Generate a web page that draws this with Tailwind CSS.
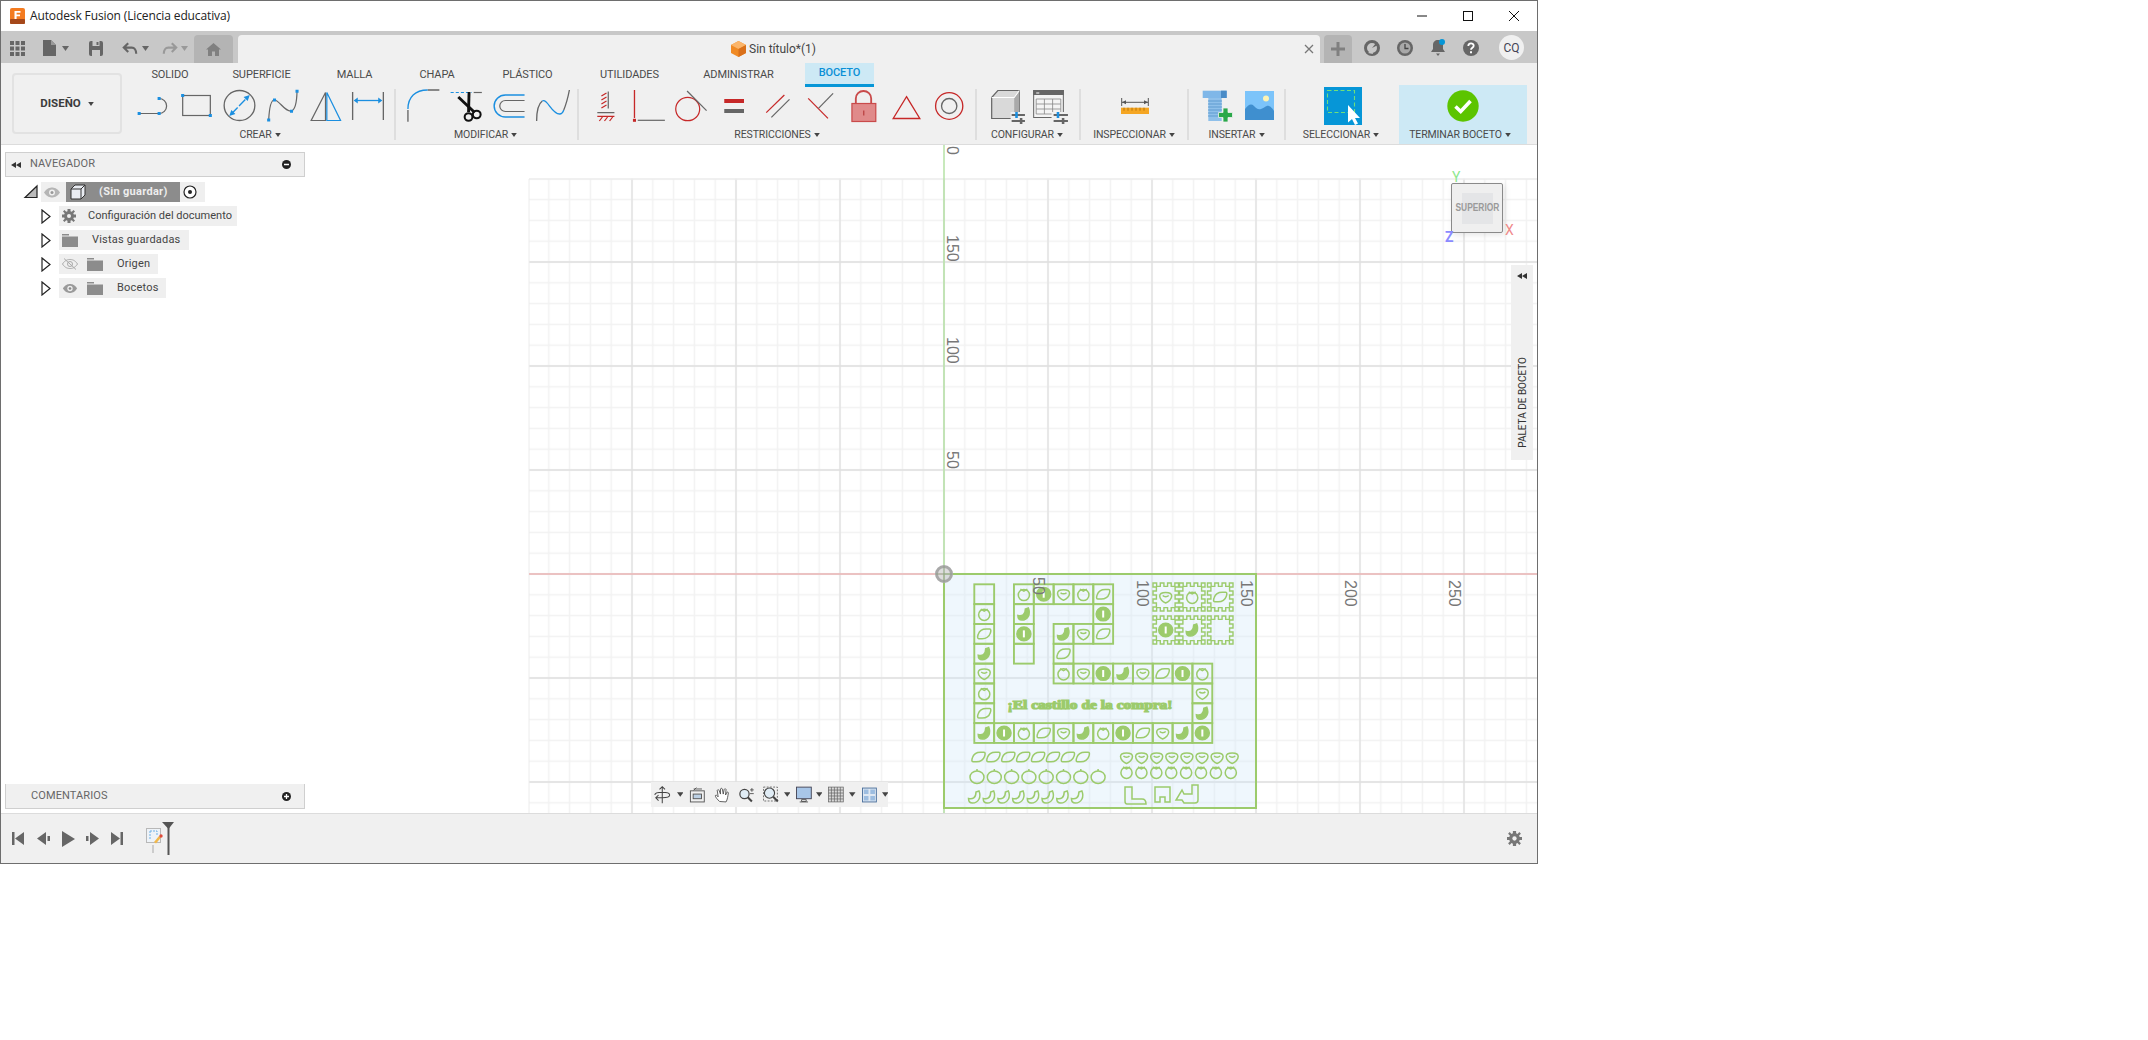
<!DOCTYPE html>
<html lang="es">
<head>
<meta charset="UTF-8">
<title>Autodesk Fusion</title>
<script src="https://cdn.jsdelivr.net/npm/@tailwindcss/browser@4"></script>
</head>
<body class="bg-white font-['Roboto',sans-serif] text-[#4a4a4a]">
<div class="w-[1538px] h-[864px] border border-[#6e6e6e] flex flex-col">

  <!-- title bar -->
  <div class="h-[30px] flex items-center bg-white">
    <svg class="ml-[9px]" width="15" height="16" viewBox="0 0 15 16"><rect width="15" height="16" rx="2" fill="#f47b20"/><rect y="11" width="15" height="5" rx="1" fill="#a5481a"/><path d="M4.500 3h6v1.800H6.600v1.600h3.400v1.800H6.600V11H4.500z" fill="#fff"/></svg>
    <span class="ml-[5px] text-[12px] font-['Open_Sans',sans-serif] text-[#222] tracking-[-0.12px]">Autodesk Fusion (Licencia educativa)</span>
    <div class="ml-auto flex items-center">
      <svg width="46" height="30" viewBox="0 0 46 30"><path d="M18 15h10" stroke="#111" stroke-width="1"/></svg>
      <svg width="46" height="30" viewBox="0 0 46 30"><rect x="18.500" y="10.500" width="9" height="9" fill="none" stroke="#111"/></svg>
      <svg width="46" height="30" viewBox="0 0 46 30"><path d="M18 10l10 10M28 10L18 20" stroke="#111"/></svg>
    </div>
  </div>

  <!-- tab strip -->
  <div class="h-[32px] bg-[#c8c8c8] flex items-end relative">
    <div class="flex items-center h-[32px] pt-[2px] absolute left-0 top-0 text-[#666]">
      <svg class="ml-[9px]" width="15" height="15" viewBox="0 0 15 15" fill="#666"><path d="M0 0h4v4H0zM5.500 0h4v4h-4zM11 0h4v4h-4zM0 5.500h4v4H0zM5.500 5.500h4v4h-4zM11 5.500h4v4h-4zM0 11h4v4H0zM5.500 11h4v4h-4zM11 11h4v4H11z"/></svg>
      <svg class="ml-[18px]" width="13" height="16" viewBox="0 0 13 16" fill="#666"><path d="M0 0h8l5 5v11H0z"/><path d="M8 0v5h5" fill="#999"/></svg>
      <svg class="ml-[6px]" width="7" height="5" viewBox="0 0 7 5" fill="#666"><path d="M0 0h7L3.500 5z"/></svg>
      <svg class="ml-[20px]" width="14" height="15" viewBox="0 0 14 15" fill="#666"><path d="M0 2a2 2 0 012-2h10a2 2 0 012 2v11a2 2 0 01-2 2H2a2 2 0 01-2-2z"/><path d="M3.500 0h7v5h-7zM3 9h8v6H3z" fill="#c8c8c8"/><path d="M7.500 1h2v3h-2z" fill="#666"/></svg>
      <svg class="ml-[19px]" width="16" height="15" viewBox="0 0 18 16" fill="none" stroke="#666" stroke-width="2.400"><path d="M7 2L2 7l5 5M3 7h8c3 0 5 3 5 7"/></svg>
      <svg class="ml-[4px]" width="7" height="5" viewBox="0 0 7 5" fill="#666"><path d="M0 0h7L3.500 5z"/></svg>
      <svg class="ml-[13px]" width="16" height="15" viewBox="0 0 18 16" fill="none" stroke="#999" stroke-width="2.400"><path d="M11 2l5 5-5 5M15 7H7c-3 0-5 3-5 7"/></svg>
      <svg class="ml-[3px]" width="7" height="5" viewBox="0 0 7 5" fill="#999"><path d="M0 0h7L3.500 5z"/></svg>
    </div>
    <div class="ml-[193px] w-[39px] h-[28px] rounded-t-[4px] bg-[#b4b4b4] flex items-center justify-center">
      <svg width="15" height="13" viewBox="0 0 15 13" fill="#808080"><path d="M7.500 0L15 6.500h-2V13H9V8.500H6V13H2V6.500H0z"/></svg>
    </div>
    <div class="ml-[5px] w-[1082px] h-[28px] rounded-t-[4px] bg-[#f0f0f0] flex items-center relative">
      <div class="flex items-center ml-[493px]">
        <svg width="15" height="16" viewBox="0 0 15 16"><path d="M7.500 0L15 4v8l-7.500 4L0 12V4z" fill="#f08a24"/><path d="M0 4l7.500 4L15 4 7.500 0z" fill="#fbb56a"/><path d="M7.500 8v8L15 12V4z" fill="#d9701a"/></svg>
        <span class="ml-[3px] text-[12px] text-[#444]">Sin título*(1)</span>
      </div>
      <svg class="absolute left-[1066px] top-[9px]" width="10" height="10" viewBox="0 0 10 10"><path d="M1 1l8 8M9 1L1 9" stroke="#777" stroke-width="1.300"/></svg>
    </div>
    <div class="ml-[4px] w-[28px] h-[28px] rounded-t-[4px] bg-[#b4b4b4] flex items-center justify-center">
      <svg width="14" height="14" viewBox="0 0 14 14"><path d="M7 0v14M0 7h14" stroke="#808080" stroke-width="3"/></svg>
    </div>
    <div class="flex items-center h-[32px] ml-[12px] pt-[1px]">
      <svg width="16" height="16" viewBox="0 0 16 16"><circle cx="8" cy="8" r="6.500" fill="none" stroke="#666" stroke-width="3"/><path d="M8 8l4-5 2 2z" fill="#666"/><path d="M4 13l4-3 1 4z" fill="#c8c8c8"/></svg>
      <svg class="ml-[17px]" width="16" height="16" viewBox="0 0 16 16"><circle cx="8" cy="8" r="8" fill="#666"/><circle cx="8" cy="8" r="5.500" fill="#a8a8a8"/><path d="M8 4v4.500h3.500" fill="none" stroke="#444" stroke-width="1.300"/></svg>
      <svg class="ml-[17px]" width="16" height="17" viewBox="0 0 16 17"><path d="M8 1c3 0 5 2 5 5v4l2 3H1l2-3V6c0-3 2-5 5-5zM6 14.500h4L8 17z" fill="#666"/><circle cx="12" cy="3" r="3" fill="#0696d7"/></svg>
      <svg class="ml-[17px]" width="16" height="16" viewBox="0 0 16 16"><circle cx="8" cy="8" r="8" fill="#666"/><path d="M5.300 6c0-3.400 5.400-3.400 5.400-.2 0 2-2.700 2-2.700 4" fill="none" stroke="#fff" stroke-width="1.800"/><path d="M7 11.200h2v2H7z" fill="#fff"/></svg>
      <div class="ml-[20px] w-[25px] h-[25px] rounded-full bg-[#f0f0f0] flex items-center justify-center text-[12px] text-[#445]">CQ</div>
    </div>
  </div>

  <!-- toolbar -->
  <div class="h-[82px] bg-[#f0f0f0] border-b border-[#dcdcdc] flex">
    <div class="ml-[11px] mt-[10px] w-[110px] shrink-0 h-[61px] rounded-[4px] border-2 border-[#e2e2e2] flex items-center justify-center gap-[7px] text-[11.500px] font-bold text-[#3c3c3c]">
      DISEÑO
      <svg width="6" height="4" viewBox="0 0 7 5" fill="#444"><path d="M0 0h7L3.500 5z"/></svg>
    </div>
    <div class="ml-[10px] flex flex-col">
      <div class="h-[24px] flex text-[11px] tracking-[-0.1px] text-[#4a4a4a]">
        <div class="w-[76px] flex items-center justify-center">SOLIDO</div>
        <div class="w-[107px] flex items-center justify-center">SUPERFICIE</div>
        <div class="w-[79px] flex items-center justify-center">MALLA</div>
        <div class="w-[86px] flex items-center justify-center">CHAPA</div>
        <div class="w-[95px] flex items-center justify-center">PLÁSTICO</div>
        <div class="w-[109px] flex items-center justify-center">UTILIDADES</div>
        <div class="w-[109px] flex items-center justify-center">ADMINISTRAR</div>
        <div class="ml-[12px] w-[69px] flex items-center justify-center bg-[#cde9f5] border-b-[3px] border-[#0696d7] text-[#0a8fd6] font-medium">BOCETO</div>
      </div>
      <div class="h-[57px] flex text-[10.500px] tracking-[-0.1px] text-[#4a4a4a]">

        <!-- crear -->
        <div class="w-[262px] flex flex-col pt-[1px]">
          <div class="flex h-[38px]">
            <svg width="43" height="38" viewBox="0 0 42 38" preserveAspectRatio="none"><path d="M7 25.500h19.300M26.300 10.500a7.500 7.500 0 010 15" fill="none" stroke="#666" stroke-width="1.200"/><path d="M5.500 24h3v3h-3zM25 9h3v3h-3zM25 24h3v3h-3z" fill="#1b8fe0"/></svg>
            <svg width="43" height="38" viewBox="0 0 42 38" preserveAspectRatio="none"><rect x="7.500" y="7.500" width="27" height="20" fill="none" stroke="#666" stroke-width="1.200"/><path d="M6 6h3v3H6zM33 26h3v3h-3z" fill="#1b8fe0"/></svg>
            <svg width="43" height="38" viewBox="0 0 42 38" preserveAspectRatio="none"><circle cx="21" cy="17.500" r="15" fill="none" stroke="#666" stroke-width="1.300"/><path d="M13 26l16-17" stroke="#1b8fe0" stroke-width="1.300" stroke-dasharray="9 2"/><path d="M11 28l2-6 4 4zM31 7l-2 6-4-4z" fill="#1b8fe0"/></svg>
            <svg width="43" height="38" viewBox="0 0 42 38" preserveAspectRatio="none"><path d="M7.500 32C8 22 9 12 13 12c5 0 10 12 16.500 11C34 22 35 12 35.200 3" fill="none" stroke="#666" stroke-width="1.200"/><path d="M6 30.500h3v3H6zM11.700 10.500h3v3h-3zM28.300 21.800h3v3h-3zM33.700 1.800h3v3h-3z" fill="#1b8fe0"/></svg>
            <svg width="43" height="38" viewBox="0 0 42 38" preserveAspectRatio="none" fill="none"><path d="M21 4.500v28H7z" stroke="#666" stroke-width="1.200"/><path d="M22.300 4.500v28H35.700z" stroke="#1b8fe0" stroke-width="1.200"/></svg>
            <svg width="43" height="38" viewBox="0 0 42 38" preserveAspectRatio="none"><path d="M5.500 4v28M35.500 4v28" stroke="#666" stroke-width="1.300"/><path d="M9 12.500h23" stroke="#1b8fe0" stroke-width="1.300"/><path d="M6.500 12.500l4-3v6zM34.500 12.500l-4-3v6z" fill="#1b8fe0"/></svg>
          </div>
          <div class="h-[18px] flex items-center justify-center gap-[3px] pr-[6px]">CREAR <svg width="6" height="4" viewBox="0 0 7 5" fill="#444"><path d="M0 0h7L3.500 5z"/></svg></div>
        </div>
        <div class="w-[2px] h-[51px] mt-[2px] bg-[#dedede]"></div>

        <!-- modificar -->
        <div class="w-[181px] flex flex-col pt-[1px]">
          <div class="flex h-[38px] pl-[6px]">
            <svg width="43" height="38" viewBox="0 0 42 38" preserveAspectRatio="none" fill="none" stroke-width="1.300"><path d="M25 2h11.500M5.800 22v11.700" stroke="#666"/><path d="M25 2C13 2 5.800 9 5.800 21" stroke="#1b8fe0"/></svg>
            <svg width="43" height="38" viewBox="0 0 42 38" preserveAspectRatio="none" fill="none"><path d="M5.500 4.500H26" stroke="#1b8fe0" stroke-width="1.200" stroke-dasharray="3 2"/><path d="M28 4.500h8" stroke="#666" stroke-width="1.200"/><path d="M13 9l16 15.500" stroke="#111" stroke-width="2.800"/><path d="M23.500 4l-.5 20" stroke="#111" stroke-width="2.800"/><circle cx="23" cy="29" r="3.800" stroke="#111" stroke-width="2"/><circle cx="31" cy="26.500" r="3.800" stroke="#111" stroke-width="2"/></svg>
            <svg width="43" height="38" viewBox="0 0 42 38" preserveAspectRatio="none" fill="none"><path d="M35.700 7H17a11 11 0 000 22h18.700" stroke="#1b8fe0" stroke-width="1.400"/><path d="M35.700 12.500H17a5.500 5.500 0 000 11h18.700" stroke="#666" stroke-width="1.200"/></svg>
            <svg width="43" height="38" viewBox="0 0 42 38" preserveAspectRatio="none" fill="none" stroke-width="1.300"><path d="M5.500 33C5.500 24 7 16 11 13" stroke="#666"/><path d="M11 13c5-3 9 13 17 13 2 0 3-1 4-4" stroke="#1b8fe0"/><path d="M32 22c2-5 4-12 5.500-20" stroke="#666"/></svg>
          </div>
          <div class="h-[18px] flex items-center justify-center gap-[3px] pr-[2px]">MODIFICAR <svg width="6" height="4" viewBox="0 0 7 5" fill="#444"><path d="M0 0h7L3.500 5z"/></svg></div>
        </div>
        <div class="w-[2px] h-[51px] mt-[2px] bg-[#dedede]"></div>

        <!-- restricciones -->
        <div class="w-[396px] flex flex-col pt-[1px]">
          <div class="flex h-[38px] pl-[5px]">
            <svg width="43" height="38" viewBox="0 0 42 38" preserveAspectRatio="none" fill="none"><path d="M23.700 3.500v17M13 24.700h16.700" stroke="#666" stroke-width="1.200"/><path d="M22 5l-5 3M22 9l-5 3M22 13l-5 3M22 17l-5 3M13 28.300h16.700M18 29l-3 4M23 29l-3 4M28 29l-3 4" stroke="#c62828" stroke-width="1.200"/></svg>
            <svg width="43" height="38" viewBox="0 0 42 38" preserveAspectRatio="none"><path d="M7.300 2v28" stroke="#c62828" stroke-width="1.300"/><path d="M5.800 30.800h3v3h-3z" fill="#c62828"/><path d="M10.500 32.300H37" stroke="#666" stroke-width="1.200"/></svg>
            <svg width="43" height="38" viewBox="0 0 42 38" preserveAspectRatio="none" fill="none" stroke-width="1.200"><circle cx="17.300" cy="21" r="11.700" stroke="#c62828"/><path d="M16.700 3l19 19.700" stroke="#666"/></svg>
            <svg width="43" height="38" viewBox="0 0 42 38" preserveAspectRatio="none"><path d="M11 11h19.300v4H11z" fill="#c62828"/><path d="M11 21h19.300v4H11z" fill="#666"/></svg>
            <svg width="43" height="38" viewBox="0 0 42 38" preserveAspectRatio="none" stroke-width="1.200"><path d="M10 24.700L27.700 7" stroke="#c62828"/><path d="M15 29.300l17.700-18" stroke="#666"/></svg>
            <svg width="43" height="38" viewBox="0 0 42 38" preserveAspectRatio="none" stroke-width="1.200"><path d="M9 10.300l19.300 20" stroke="#c62828"/><path d="M19 20.300L33.300 5.300" stroke="#666"/></svg>
            <svg width="43" height="38" viewBox="0 0 42 38" preserveAspectRatio="none"><path d="M13.500 15.500v-5a7.500 7.500 0 0115 0v5" fill="none" stroke="#c94a4a" stroke-width="1.800"/><rect x="9.700" y="15.500" width="23.300" height="18" fill="#e08a8a" stroke="#c94a4a" stroke-width="1.200"/><path d="M21.300 22.500v5" stroke="#b03030"/></svg>
            <svg width="43" height="38" viewBox="0 0 42 38" preserveAspectRatio="none"><path d="M21 8.700l13 21.800H8z" fill="none" stroke="#c62828" stroke-width="1.300"/></svg>
            <svg width="43" height="38" viewBox="0 0 42 38" preserveAspectRatio="none" fill="none" stroke-width="1.300"><circle cx="20.700" cy="18" r="13.300" stroke="#c62828"/><circle cx="20.700" cy="18" r="7.500" stroke="#666"/></svg>
          </div>
          <div class="h-[18px] flex items-center justify-center gap-[3px]">RESTRICCIONES <svg width="6" height="4" viewBox="0 0 7 5" fill="#444"><path d="M0 0h7L3.500 5z"/></svg></div>
        </div>
        <div class="w-[2px] h-[51px] mt-[2px] bg-[#dedede]"></div>

        <!-- configurar -->
        <div class="w-[102px] flex flex-col pt-[1px]">
          <div class="flex h-[38px] pl-[7px]">
            <svg width="43" height="38" viewBox="0 0 42 38" preserveAspectRatio="none"><path d="M7.500 9.500l6-7h21v22l-5 6H7.500z" fill="#d9d9d9" stroke="#666" stroke-width="1.200"/><path d="M29.500 9v21.500l5-6v-22z" fill="#aaa"/><path d="M7.500 9.500h22l5-7" fill="none" stroke="#fff"/><path d="M26 24h16v11H26z" fill="#f0f0f0"/><path d="M27 27h13M27 33h13" stroke="#666" stroke-width="1.800"/><path d="M30.500 24h2.500v6h-2.500z" fill="#1b8fe0"/><path d="M35 30h2.500v6H35z" fill="#666"/></svg>
            <svg width="43" height="38" viewBox="0 0 42 38" preserveAspectRatio="none"><rect x="6.500" y="2.500" width="29" height="27" fill="#f4f4f4" stroke="#666"/><path d="M6 2h30v5H6z" fill="#666"/><path d="M9 5h3" stroke="#fff"/><path d="M9 11h24M9 16h24M9 21h24M9 26h24M9 11v15M17 11v15M25 11v15M33 11v15" stroke="#888" stroke-width=".8"/><path d="M24 24h18v11H24z" fill="#f0f0f0"/><path d="M26 27h14M26 33h14" stroke="#666" stroke-width="1.800"/><path d="M29 24h2.500v6H29z" fill="#1b8fe0"/><path d="M34 30h2.500v6H34z" fill="#666"/></svg>
          </div>
          <div class="h-[18px] flex items-center justify-center gap-[3px] pr-[2px]">CONFIGURAR <svg width="6" height="4" viewBox="0 0 7 5" fill="#444"><path d="M0 0h7L3.500 5z"/></svg></div>
        </div>
        <div class="w-[2px] h-[51px] mt-[2px] bg-[#dedede]"></div>

        <!-- inspeccionar -->
        <div class="w-[106px] flex flex-col pt-[1px]">
          <div class="flex h-[38px] pl-[33px]">
            <svg width="42" height="38" viewBox="0 0 42 38"><path d="M7.700 10v8M34.300 10v8M8 14.300h26" stroke="#555"/><path d="M8 14.300l4-2v4zM34 14.300l-4-2v4z" fill="#555"/><path d="M7 19.700h28V26H7z" fill="#f5a623"/><path d="M10 19.700v3M14 19.700v3M18 19.700v3M22 19.700v3M26 19.700v3M30 19.700v3" stroke="#a86a00" stroke-width=".8"/></svg>
          </div>
          <div class="h-[18px] flex items-center justify-center gap-[3px]">INSPECCIONAR <svg width="6" height="4" viewBox="0 0 7 5" fill="#444"><path d="M0 0h7L3.500 5z"/></svg></div>
        </div>
        <div class="w-[2px] h-[51px] mt-[2px] bg-[#dedede]"></div>

        <!-- insertar -->
        <div class="w-[95px] flex flex-col pt-[1px]">
          <div class="flex h-[38px] pl-[8px]">
            <svg width="42" height="38" viewBox="0 0 42 38"><path d="M5.700 2.700h24v7.300h-24z" fill="#7fb7e8"/><path d="M24 2.700h5.700V10H24z" fill="#4a8cc7"/><path d="M11.300 10h13.400v23H11.300z" fill="#8fc0ea"/><path d="M11 13h14M11 16h14M11 19h14M11 22h14M11 25h14M11 28h14" stroke="#5f9bd0"/><path d="M26 20h5v4.500h4.500v5H31V34h-5v-4.500h-4.500v-5H26z" fill="#2aa84a" stroke="#f0f0f0" stroke-width=".8"/></svg>
            <svg width="42" height="38" viewBox="0 0 42 38"><rect x="6" y="3" width="29" height="29" fill="#7cc4fa"/><path d="M6 32V21c3-4 6-6 9-3 2 2 4 4 7 3 4-1 5-4 8-3 2 .7 4 3 5 5v9z" fill="#3f8fcf"/><circle cx="27" cy="10.500" r="3" fill="#fdf3b4"/></svg>
          </div>
          <div class="h-[18px] flex items-center justify-center gap-[3px]">INSERTAR <svg width="6" height="4" viewBox="0 0 7 5" fill="#444"><path d="M0 0h7L3.500 5z"/></svg></div>
        </div>
        <div class="w-[2px] h-[51px] mt-[2px] bg-[#dedede]"></div>

        <!-- seleccionar -->
        <div class="w-[113px] flex flex-col">
          <div class="flex h-[39px] justify-center">
            <svg width="38" height="38" viewBox="0 0 38 38"><rect width="38" height="38" fill="#0696d7"/><rect x="3.500" y="3.500" width="27" height="22" fill="none" stroke="#6fe07a" stroke-width="1.100" stroke-dasharray="4 2.500"/><path d="M24 18v17.500l4-3.500 3 6 3-1.500-3-5.500h5z" fill="#fff"/></svg>
          </div>
          <div class="h-[18px] flex items-center justify-center gap-[3px] pr-[3px]">SELECCIONAR <svg width="6" height="4" viewBox="0 0 7 5" fill="#444"><path d="M0 0h7L3.500 5z"/></svg></div>
        </div>

        <!-- terminar boceto -->
        <div class="w-[128px] h-[59px] -mt-[2px] bg-[#cde9f5] flex flex-col">
          <div class="flex h-[41px] items-center justify-center pr-[1px] pt-[1px]">
            <svg width="32" height="32" viewBox="0 0 32 32"><circle cx="16" cy="16" r="15.700" fill="#5cc400"/><path d="M8.500 16.500l5.200 5L23.500 11" fill="none" stroke="#fff" stroke-width="3.600"/></svg>
          </div>
          <div class="h-[18px] flex items-center justify-center gap-[3px] pr-[6px]">TERMINAR BOCETO <svg width="6" height="4" viewBox="0 0 7 5" fill="#444"><path d="M0 0h7L3.500 5z"/></svg></div>
        </div>
      </div>
    </div>
  </div>

  <!-- viewport -->
  <div class="h-[668px] relative bg-white">
    <svg class="absolute left-[-1px] top-0" width="1537" height="668" viewBox="0 145 1537 668">
      <defs>
        <pattern id="minor" patternUnits="userSpaceOnUse" x="933.600" y="563.600" width="20.800" height="20.800"><path d="M10.400 0v20.800M0 10.400h20.800" stroke="#f2f2f2" stroke-width="1.500" fill="none"/></pattern>
        <pattern id="major" patternUnits="userSpaceOnUse" x="892" y="522" width="104" height="104"><path d="M52 0v104M0 52h104" stroke="#e0e0e0" stroke-width="1.300" fill="none"/></pattern>
      </defs>
      <rect x="529" y="178.500" width="1008" height="634.500" fill="url(#minor)"/>
      <rect x="529" y="178.500" width="1008" height="634.500" fill="url(#major)"/>
      <path d="M529 179h1008" stroke="#ececec" stroke-width="1.500"/>
      <path d="M529 179v634" stroke="#ececec"/>
      <rect x="944" y="574" width="312" height="234" fill="#cfe8fa" fill-opacity=".33"/>
      <path d="M944 145v668" stroke="#b6e2a6" stroke-width="1.500"/>
      <path d="M529 574h1008" stroke="#f2a0a0" stroke-width="1.200"/>
      <g id="board" fill="none" stroke="#9ccb6c" stroke-width="1.500"></g>
      <rect x="944" y="574" width="312" height="234" fill="none" stroke="#9ccb6c" stroke-width="2"/>
      <text x="1090" y="708.500" text-anchor="middle" textLength="165" lengthAdjust="spacingAndGlyphs" font-family="'Liberation Serif',serif" font-weight="700" font-size="11.500" fill="#9ccb6c" stroke="#9ccb6c" stroke-width="1.100">¡El castillo de la compra!</text>
      <g font-family="'Liberation Sans',sans-serif" font-size="16" fill="#777">
        <text transform="translate(947,146) rotate(90)">0</text>
        <text transform="translate(947,235) rotate(90)">150</text>
        <text transform="translate(947,337) rotate(90)">100</text>
        <text transform="translate(947,451) rotate(90)">50</text>
        <text transform="translate(1033,577) rotate(90)">50</text>
        <text transform="translate(1137,580) rotate(90)">100</text>
        <text transform="translate(1241,580) rotate(90)">150</text>
        <text transform="translate(1345,580) rotate(90)">200</text>
        <text transform="translate(1449,580) rotate(90)">250</text>
      </g>
      <circle cx="944" cy="574" r="7.500" fill="#cfcfcf" fill-opacity=".7" stroke="#a8a8a8" stroke-width="3"/>
      <path d="M944 566v16M936 574h16" stroke="#8aa07e" stroke-width=".8"/>
    </svg>

    <!-- browser panel -->
    <div class="absolute left-[4px] top-[7px] w-[300px] text-[11px] text-[#444]">
      <div class="h-[25px] bg-[#f0f0f0] border border-[#cfcfcf] flex items-center">
        <svg class="ml-[5px]" width="10" height="6" viewBox="0 0 10 6" fill="#333"><path d="M5 0v6L0 3zM10 0v6L5 3z"/></svg>
        <span class="ml-[9px] text-[#666] tracking-[0.1px]">NAVEGADOR</span>
        <svg class="ml-auto mr-[13px]" width="9" height="9" viewBox="0 0 9 9"><circle cx="4.500" cy="4.500" r="4.500" fill="#222"/><path d="M2 4.500h5" stroke="#fff" stroke-width="1.500"/></svg>
      </div>
      <div class="mt-[5px] flex flex-col gap-[4px]">
        <div class="h-[20px] flex items-center">
          <svg class="ml-[17px]" width="19" height="20" viewBox="0 0 19 20"><path d="M3 15.500L15 4v11.500z" fill="#bbb" stroke="#222" stroke-width="1.200"/></svg>
          <div class="w-[164px] h-[20px] bg-[#efefef] flex items-center">
            <svg class="ml-[2px]" width="18" height="11" viewBox="0 0 18 11"><path d="M1 5.500C4 1 7 .5 9 .5s5 .5 8 5c-3 4.500-6 5-8 5s-5-.5-8-5z" fill="#b5b5b5"/><circle cx="9" cy="5.500" r="3" fill="#efefef"/><circle cx="9" cy="5.500" r="1.500" fill="#999"/></svg>
            <div class="ml-[5px] w-[114px] h-[20px] bg-[#8c8c8c] flex items-center">
              <svg class="ml-[3px]" width="18" height="18" viewBox="0 0 18 18"><path d="M2 6l4-4h10v10l-4 4H2z" fill="#e9ecf2" stroke="#333" stroke-width="1"/><path d="M2 6h10v10M12 6l4-4" fill="none" stroke="#333"/></svg>
              <span class="ml-[12px] font-bold text-[#eeeeee] tracking-[0.3px]">(Sin guardar)</span>
            </div>
            <svg class="ml-[3px]" width="14" height="14" viewBox="0 0 14 14"><circle cx="7" cy="7" r="6" fill="#fff" stroke="#222" stroke-width="1.200"/><circle cx="7" cy="7" r="2" fill="#222"/></svg>
          </div>
        </div>
        <div class="h-[20px] flex items-center">
          <svg class="ml-[36px]" width="18" height="15" viewBox="0 0 18 15"><path d="M1 1l8 6.500L1 14z" fill="#fff" stroke="#222" stroke-width="1.200"/></svg>
          <div class="w-[178px] h-[20px] bg-[#efefef] flex items-center">
            <svg class="ml-[3px]" width="14" height="14" viewBox="0 0 14 14" fill="#777"><path d="M5.500 0h3v2.200l1.300.5L11.500 1l1.500 1.500-1.700 1.700.5 1.300H14v3h-2.200l-.5 1.300 1.700 1.700-1.500 1.500-1.700-1.700-1.300.5V14h-3v-2.200l-1.300-.5L2.500 13 1 11.500l1.700-1.700-.5-1.300H0v-3h2.200l.5-1.300L1 2.500 2.500 1l1.700 1.700 1.300-.5z"/><circle cx="7" cy="7" r="2" fill="#efefef"/></svg>
            <span class="ml-[12px]">Configuración del documento</span>
          </div>
        </div>
        <div class="h-[20px] flex items-center">
          <svg class="ml-[36px]" width="18" height="15" viewBox="0 0 18 15"><path d="M1 1l8 6.500L1 14z" fill="#fff" stroke="#222" stroke-width="1.200"/></svg>
          <div class="w-[130px] h-[20px] bg-[#efefef] flex items-center">
            <svg class="ml-[3px]" width="16" height="13" viewBox="0 0 16 13" fill="#8c8c8c"><path d="M0 0h7v1.500H0zM0 2.500h16V13H0z"/></svg>
            <span class="ml-[14px] tracking-[0.2px]">Vistas guardadas</span>
          </div>
        </div>
        <div class="h-[20px] flex items-center">
          <svg class="ml-[36px]" width="18" height="15" viewBox="0 0 18 15"><path d="M1 1l8 6.500L1 14z" fill="#fff" stroke="#222" stroke-width="1.200"/></svg>
          <div class="w-[99px] h-[20px] bg-[#efefef] flex items-center">
            <svg class="ml-[3px]" width="16" height="12" viewBox="0 0 16 12" fill="none" stroke="#aaa"><path d="M.5 6C3 2 6 1.500 8 1.500s5 .5 7.500 4.500C13 10 10 10.500 8 10.500S3 10 .5 6z"/><circle cx="8" cy="6" r="2.500"/><path d="M2 .5L14 11.500"/></svg>
            <svg class="ml-[9px]" width="16" height="13" viewBox="0 0 16 13" fill="#8c8c8c"><path d="M0 0h7v1.500H0zM0 2.500h16V13H0z"/></svg>
            <span class="ml-[14px] tracking-[0.2px]">Origen</span>
          </div>
        </div>
        <div class="h-[20px] flex items-center">
          <svg class="ml-[36px]" width="18" height="15" viewBox="0 0 18 15"><path d="M1 1l8 6.500L1 14z" fill="#fff" stroke="#222" stroke-width="1.200"/></svg>
          <div class="w-[107px] h-[20px] bg-[#efefef] flex items-center">
            <svg class="ml-[3px]" width="16" height="11" viewBox="0 0 18 11"><path d="M1 5.500C4 1 7 .5 9 .5s5 .5 8 5c-3 4.500-6 5-8 5s-5-.5-8-5z" fill="#9a9a9a"/><circle cx="9" cy="5.500" r="3" fill="#efefef"/><circle cx="9" cy="5.500" r="1.500" fill="#888"/></svg>
            <svg class="ml-[9px]" width="16" height="13" viewBox="0 0 16 13" fill="#8c8c8c"><path d="M0 0h7v1.500H0zM0 2.500h16V13H0z"/></svg>
            <span class="ml-[14px] tracking-[0.2px]">Bocetos</span>
          </div>
        </div>
      </div>
    </div>

    <!-- comments panel -->
    <div class="absolute left-[4px] top-[639px] w-[300px] h-[25px] bg-[#f0f0f0] border-b border-x border-[#cfcfcf] flex items-center text-[11px]">
      <span class="ml-[25px] text-[#666] tracking-[0.1px]">COMENTARIOS</span>
      <svg class="ml-auto mr-[13px]" width="9" height="9" viewBox="0 0 9 9"><circle cx="4.500" cy="4.500" r="4.500" fill="#222"/><path d="M2 4.500h5M4.500 2v5" stroke="#fff" stroke-width="1.300"/></svg>
    </div>

    <!-- view cube -->
    <div class="absolute left-[1450px] top-[38px] w-[52px] h-[50px] bg-[#efefef] border border-[#8a8a8a] rounded-[2px] shadow-[2px_2px_6px_rgba(0,0,0,0.1)] flex items-center justify-center">
      <div class="w-[31px] h-[31px] bg-[#e4e5e7] flex items-center justify-center"><span class="text-[10.500px] font-bold text-[#9a9a9a] font-['Liberation_Sans',sans-serif] scale-x-[0.8]">SUPERIOR</span></div>
    </div>
    <span class="absolute left-[1451px] top-[22px] text-[14px] text-[#8fe88f]">Y</span>
    <span class="absolute left-[1504px] top-[75px] text-[14px] text-[#f08a8a]">X</span>
    <span class="absolute left-[1444px] top-[82px] text-[14px] font-bold text-[#8a8aff]">Z</span>

    <!-- sketch palette tab -->
    <div class="absolute left-[1510px] top-[120px] w-[22px] h-[195px] bg-[#f0f0f0] flex flex-col items-center">
      <svg class="mt-[8px]" width="10" height="6" viewBox="0 0 10 6" fill="#333"><path d="M5 0v6L0 3zM10 0v6L5 3z"/></svg>
      <span class="mt-auto mb-[12px] [writing-mode:vertical-rl] rotate-180 text-[10px] text-[#333]">PALETA DE BOCETO</span>
    </div>

    <!-- nav bar -->
    <div class="absolute left-[650px] top-[637px] w-[237px] h-[25px] bg-[#f0f0f0] flex items-center">
      <svg class="ml-[2px]" width="20" height="20" viewBox="0 0 20 20" fill="none" stroke="#444" stroke-width="1.100"><path d="M10 1v18M7 4l3-3 3 3M2 10c0-2 4-3 8-3s8 1 8 3-4 3-8 3H4M6 10l-3 3 3 3"/></svg>
      <svg class="ml-[5px]" width="7" height="5" viewBox="0 0 7 5" fill="#444"><path d="M0 0h7L3.500 5z"/></svg>
      <svg class="ml-[6px]" width="18" height="18" viewBox="0 0 18 18" fill="none" stroke="#555"><rect x="1.500" y="4.500" width="15" height="12"/><rect x="4.500" y="8" width="9" height="5" fill="#bcd0e4"/><path d="M5 4l3-3M5 2.500h9"/></svg>
      <svg class="ml-[8px]" width="18" height="18" viewBox="0 0 18 18" fill="#fff" stroke="#444" stroke-width=".9"><path d="M6 16c-2-2-5-5-4.500-6.500 1-1 2 .5 3 1.500L3.500 4c.5-1 1.500-1 2 0L7 8 7 2.500c.5-1 1.500-1 2 0L10 8l1-5c.5-1 1.500-1 2 0l-.5 6 1.500-3c.7-.5 1.500 0 1.500.8C15 10 14.500 14 13 16.500z"/></svg>
      <svg class="ml-[8px]" width="18" height="18" viewBox="0 0 18 18" fill="none" stroke="#444"><circle cx="7" cy="8" r="5" fill="#e0ecf5" stroke-width="1.300"/><path d="M10.500 11.500l4.500 4.500" stroke-width="2.200"/><path d="M13 3.500h4M15 1.500v4M13 7.500h4" stroke-width=".9"/></svg>
      <svg class="ml-[8px]" width="17" height="17" viewBox="0 0 17 17" fill="none" stroke="#444"><rect x=".5" y=".5" width="15" height="15" stroke-dasharray="2 1.500" stroke-width=".8"/><circle cx="7" cy="7" r="5.500" fill="#e0ecf5" stroke-width="1.200"/><path d="M11 11l5 5" stroke-width="2.200"/></svg>
      <svg class="ml-[5px]" width="7" height="5" viewBox="0 0 7 5" fill="#444"><path d="M0 0h7L3.500 5z"/></svg>
      <svg class="ml-[6px]" width="17" height="18" viewBox="0 0 17 18"><rect x=".5" y=".5" width="16" height="12.500" fill="#a8c6e8" stroke="#445"/><path d="M6 14h5v2H6zM4 16.500h9" stroke="#555" fill="none"/></svg>
      <svg class="ml-[4px]" width="7" height="5" viewBox="0 0 7 5" fill="#444"><path d="M0 0h7L3.500 5z"/></svg>
      <svg class="ml-[6px]" width="17" height="17" viewBox="0 0 17 17" stroke="#666" stroke-width=".8" fill="#d8d8d8"><rect x=".5" y=".5" width="16" height="16"/><path d="M3.700 .5v16M6.900 .5v16M10.100 .5v16M13.300 .5v16M.5 3.700h16M.5 6.900h16M.5 10.100h16M.5 13.300h16"/></svg>
      <svg class="ml-[5px]" width="7" height="5" viewBox="0 0 7 5" fill="#444"><path d="M0 0h7L3.500 5z"/></svg>
      <svg class="ml-[6px]" width="16" height="16" viewBox="0 0 16 16"><rect x=".5" y=".5" width="15" height="15" fill="#dfe8f2" stroke="#4a6f9c"/><path d="M2 2h5v5H2zM9 2h5v5H9zM2 9h5v5H2zM9 9h5v5H9z" fill="#9dbde0"/></svg>
      <svg class="ml-[5px]" width="7" height="5" viewBox="0 0 7 5" fill="#444"><path d="M0 0h7L3.500 5z"/></svg>
    </div>
  </div>

  <!-- timeline -->
  <div class="h-[50px] bg-[#f0f0f0] border-t border-[#dcdcdc] flex items-center">
    <svg class="ml-[11px]" width="12" height="13" viewBox="0 0 12 13" fill="#666"><path d="M0 0h2.500v13H0zM12 0v13L3 6.500z"/></svg>
    <svg class="ml-[13px]" width="13" height="13" viewBox="0 0 13 13" fill="#666"><path d="M9 0v13L0 6.500zM10.500 4H13v5h-2.500z"/></svg>
    <svg class="ml-[12px]" width="13" height="16" viewBox="0 0 13 16" fill="#666"><path d="M0 0l13 8-13 8z"/></svg>
    <svg class="ml-[11px]" width="13" height="13" viewBox="0 0 13 13" fill="#666"><path d="M4 0v13l9-6.500zM0 4h2.500v5H0z"/></svg>
    <svg class="ml-[12px]" width="12" height="13" viewBox="0 0 12 13" fill="#666"><path d="M0 0v13l9-6.500zM9.500 0H12v13H9.500z"/></svg>
    <svg class="ml-[23px]" width="17" height="33" viewBox="0 0 17 33"><rect x=".5" y="6.500" width="14" height="14" fill="#eef3f8" stroke="#b8b8b8"/><path d="M4 9h7v5M4 9v8" fill="none" stroke="#6fb1e6" stroke-dasharray="2 1"/><path d="M8 20l5-6 2 1.500-5 6z" fill="#f2b84a"/><circle cx="15" cy="14" r="1.700" fill="#e04a3a"/><path d="M7 23v8" stroke="#ccc" stroke-width="2"/></svg>
    <svg class="ml-[-1px]" width="13" height="33" viewBox="0 0 13 33" fill="#555"><path d="M0 0h12L6.500 7z"/><path d="M5.500 1h2v32h-2z"/></svg>
    <svg class="ml-auto mr-[15px]" width="15" height="15" viewBox="0 0 14 14" fill="#777"><path d="M5.500 0h3v2.200l1.300.5L11.500 1l1.500 1.500-1.700 1.700.5 1.300H14v3h-2.200l-.5 1.300 1.700 1.700-1.500 1.500-1.700-1.700-1.300.5V14h-3v-2.200l-1.300-.5L2.500 13 1 11.500l1.700-1.700-.5-1.300H0v-3h2.200l.5-1.300L1 2.500 2.500 1l1.700 1.700 1.300-.5z"/><circle cx="7" cy="7" r="2" fill="#f0f0f0"/></svg>
  </div>
</div>

<script>
  // sketch content of the board, in page coordinates
  const green = '#9ccb6c';
  const shapes = {
    tomato: '<circle cy=".8" r="5.600"/><path d="M-3.500-5L0-3l3.500-2"/>',
    lemon: '<path d="M-5.500 4.800C-7 4.800-6.800 2.500-6 .5-5-2.500-2-4.800 2-4.800H5.500C7-4.800 6.800-2.500 6-.5 5 2.500 2 4.800-2 4.800z"/>',
    banana: '<path fill="' + green + '" d="M-6 1.500C-2 2.500 1.500 1 1.500-5L4.500-6C7 0 4 6-2 6-4.500 6-6 4-6 1.500z"/>',
    straw: '<path d="M-6-1C-6-3.500-3-4.500 0-4.500S6-3.500 6-1C6 2 3 5 0 6-3 5-6 2-6-1z"/><path d="M-3-1.500C-1.500 0 1.500 0 3-1.500"/>',
    pumpkin: '<ellipse rx="7" ry="6.800" fill="' + green + '"/><rect x="-1" y="-3.500" width="2" height="7" fill="#fff" stroke="none"/>',
    pumpkinOpen: '<ellipse rx="7" ry="6.300" cy=".7"/><path d="M0-5.500v-2"/>',
    bananaOpen: '<path d="M-6 1.500C-2 2.500 1.500 1 1.500-5L4.500-6C7 0 4 6-2 6-4.500 6-6 4-6 1.500z"/>'
  };
  const put = (kind, x, y) => `<g transform="translate(${x} ${y})">${shapes[kind]}</g>`;

  const gx = 974.3, gy = 584.3, c = 19.83;
  const cells = [
    [0,0,null],[0,1,'tomato'],[0,2,'lemon'],[0,3,'banana'],[0,4,'straw'],[0,5,'tomato'],[0,6,'lemon'],
    [0,7,'banana'],[1,7,'pumpkin'],[2,7,'tomato'],[3,7,'lemon'],[4,7,'straw'],[5,7,'banana'],[6,7,'tomato'],[7,7,'pumpkin'],[8,7,'lemon'],[9,7,'straw'],[10,7,'banana'],[11,7,'pumpkin'],
    [11,6,'banana'],[11,5,'straw'],[11,4,'tomato'],[10,4,'pumpkin'],[9,4,'lemon'],[8,4,'straw'],[7,4,'banana'],[6,4,'pumpkin'],[5,4,'straw'],[4,4,'tomato'],
    [4,3,'lemon'],[4,2,'banana'],[5,2,'straw'],[6,2,'lemon'],[6,1,'pumpkin'],[6,0,'lemon'],[5,0,'tomato'],[4,0,'straw'],[3,0,'pumpkin'],[2,0,'tomato'],[2,1,'banana'],[2,2,'pumpkin'],[2,3,null]
  ];
  let out = '';
  cells.forEach(([i, j, kind]) => {
    const x = gx + i * c, y = gy + j * c;
    out += `<rect x="${x}" y="${y}" width="${c}" height="${c}" stroke-width="1.900"/>`;
    if (kind) out += put(kind, x + c / 2, y + c / 2);
  });

  // jigsaw-edged tiles at the top right
  function tile(x, y, w, h) {
    const a = 3.4, teeth = 3, sx = w / (teeth * 2 + 1), sy = h / (teeth * 2 + 1);
    let d = `M${x} ${y}`, px = x, py = y;
    for (let k = 0; k <= teeth * 2; k++) { px += sx; const o = k % 2 ? a : 0; d += `L${px - sx} ${y + o}L${px} ${y + o}`; }
    for (let k = 0; k <= teeth * 2; k++) { py += sy; const o = k % 2 ? -a : 0; d += `L${x + w + o} ${py - sy}L${x + w + o} ${py}`; }
    for (let k = 0; k <= teeth * 2; k++) { px -= sx; const o = k % 2 ? -a : 0; d += `L${px + sx} ${y + h + o}L${px} ${y + h + o}`; }
    for (let k = 0; k <= teeth * 2; k++) { py -= sy; const o = k % 2 ? a : 0; d += `L${x + o} ${py + sy}L${x + o} ${py}`; }
    return `<path stroke-width="1.400" d="${d}z"/>`;
  }
  [[1153,583,'straw'],[1179.500,583,'tomato'],[1207.500,583,'lemon'],[1153,616,'pumpkin'],[1179.500,616,'banana'],[1207.500,616,null]].forEach(([x, y, kind]) => {
    out += tile(x, y, 25.500, 28);
    if (kind) out += put(kind, x + 12.700, y + 14);
  });

  // loose pieces under the board
  for (let k = 0; k < 8; k++) {
    out += put('lemon', 978.500 + k * 14.900, 757);
    out += put('pumpkinOpen', 977 + k * 17.300, 776.500);
    out += put('bananaOpen', 974.500 + k * 14.700, 797);
    out += put('straw', 1126.500 + k * 15.100, 757.500);
    out += put('tomato', 1126.500 + k * 14.900, 772);
  }
  out += '<path d="M1125 787h7v12h10c3 0 4 2 4 5h-19c-1.500 0-2-1-2-3z"/>';
  out += '<path d="M1155 787h15v15h-5v-5h-5v5h-5z"/>';
  out += '<path d="M1192 785h6v15c0 2-1 3-3 3h-11l-2-3h-6l6-10 2 4h8z"/>';
  document.getElementById('board').innerHTML = out;
</script>
</body>
</html>
